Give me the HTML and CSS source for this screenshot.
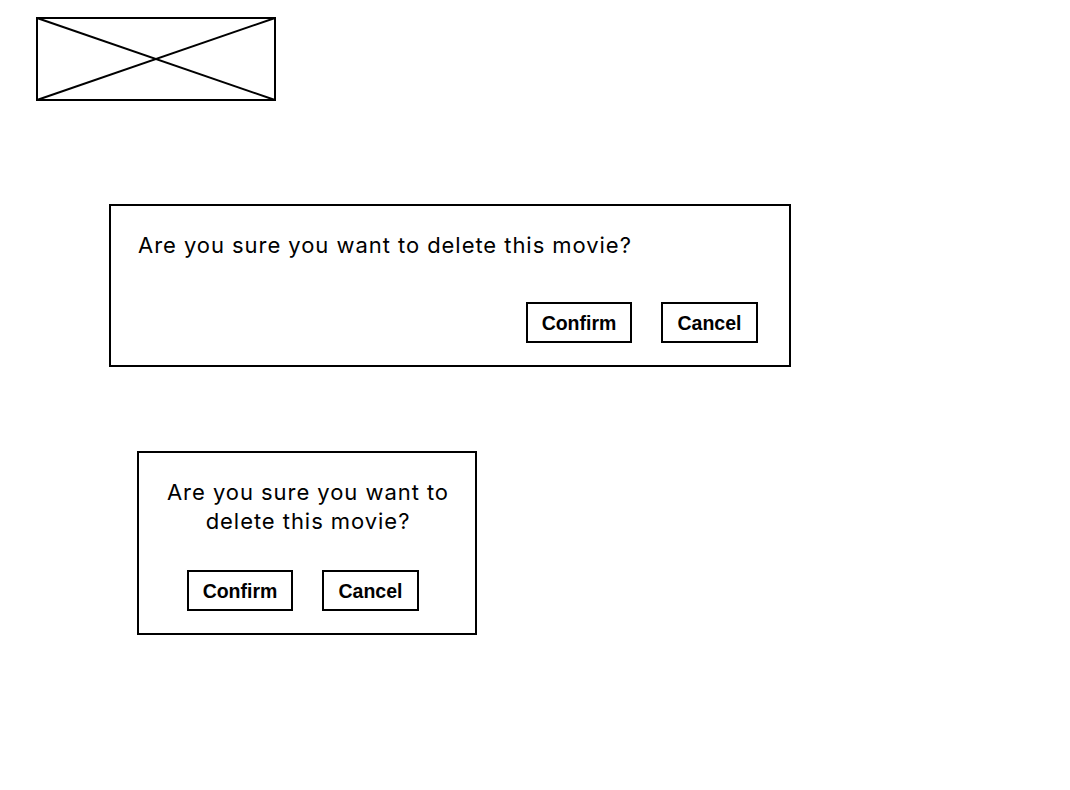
FILE: index.html
```html
<!DOCTYPE html>
<html>
<head>
<meta charset="utf-8">
<link rel="stylesheet" href="styles.css">
</head>
<body>
<div class="placeholder">
  <svg width="240" height="84" viewBox="0 0 240 84">
    <rect x="1" y="1" width="238" height="82" fill="none" stroke="#000" stroke-width="2"/>
    <line x1="1" y1="1" x2="239" y2="83" stroke="#000" stroke-width="2"/>
    <line x1="1" y1="83" x2="239" y2="1" stroke="#000" stroke-width="2"/>
  </svg>
</div>
<div class="dialog wide">
  <p class="msg">Are you sure you want to delete this movie?</p>
  <div class="actions">
    <button class="btn confirm">Confirm</button>
    <button class="btn cancel">Cancel</button>
  </div>
</div>
<div class="dialog narrow">
  <p class="msg">Are you sure you want to<br>delete this movie?</p>
  <div class="actions">
    <button class="btn confirm">Confirm</button>
    <button class="btn cancel">Cancel</button>
  </div>
</div>
</body>
</html>
```
FILE: styles.css
```css
html, body {
  margin: 0;
  padding: 0;
  background: #fff;
}
body {
  font-family: Inter, "Liberation Sans", sans-serif;
  color: #000;
  padding-top: 17px;
}
.placeholder {
  margin-left: 36px;
  width: 240px;
  height: 84px;
}
.placeholder svg {
  display: block;
}
.dialog {
  border: 2px solid #000;
  box-sizing: border-box;
  display: flex;
  flex-direction: column;
}
.msg {
  margin: 0;
  font-size: 22px;
  line-height: 29px;
  font-weight: 400;
  letter-spacing: 0.95px;
}
.wide {
  margin-top: 103px;
  margin-left: 109px;
  width: 682px;
  height: 163px;
  padding: 25px 31px 22px 27px;
}
.wide .actions {
  margin-top: auto;
  display: flex;
  justify-content: flex-end;
  gap: 29px;
}
.narrow {
  margin-top: 84px;
  margin-left: 137px;
  width: 340px;
  height: 184px;
  padding: 25px 0 22px 0;
  align-items: center;
  text-align: center;
}
.narrow .msg {
  padding-left: 2px;
}
.narrow .actions {
  margin-top: auto;
  display: flex;
  gap: 29px;
  margin-right: 8px;
}
.btn {
  font-family: "Liberation Sans", Arial, sans-serif;
  font-weight: 700;
  font-size: 19.5px;
  background: #fff;
  color: #000;
  border: 2px solid #000;
  height: 41px;
  box-sizing: border-box;
  padding: 0;
  margin: 0;
  border-radius: 0;
  display: flex;
  align-items: center;
  justify-content: center;
  padding-top: 1px;
}
.confirm { width: 106px; }
.cancel { width: 97px; }
```
